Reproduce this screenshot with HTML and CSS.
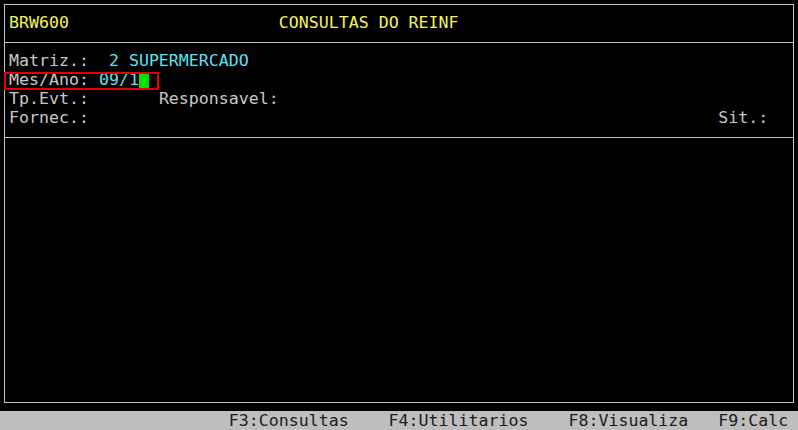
FILE: index.html
```html
<!DOCTYPE html>
<html lang="en">
<head>
    <meta charset="UTF-8">
    <meta name="viewport" content="width=device-width, initial-scale=1.0">
    <title>BRW600 - Consultas do REINF</title>
    <link rel="stylesheet" href="styles.css">
</head>
<body>
    <div class="screen">
        <div class="frame">
            <!-- Title -->
            <div class="title-row">
                <div class="line title">BRW600                     CONSULTAS DO REINF</div>
            </div>

            <!-- Filter fields -->
            <div class="fields">
                <div class="line"><span class="label">Matriz.:</span>  <span class="value">2 SUPERMERCADO</span></div>
                <div class="line field-focus"><span class="label">Mes/Ano:</span> <span class="value">09/1</span><span class="cursor"></span><span class="highlight"></span></div>
                <div class="line"><span class="label">Tp.Evt.:</span>       <span class="label">Responsavel:</span></div>
                <div class="line"><span class="label">Fornec.:</span>                                                               <span class="label">Sit.:</span></div>
            </div>

            <!-- Results area -->
            <div class="results"></div>
        </div>

        <div class="status-bar">
            <div class="line">                       F3:Consultas    F4:Utilitarios    F8:Visualiza   F9:Calc</div>
        </div>
    </div>
</body>
</html>
```

FILE: styles.css
```css
:root {
    --bg: #000000;
    --frame: #c4c4c4;
    --label: #c8c8c8;
    --value: #5ce2f2;
    --title: #f4f45a;
    --cursor: #00e000;
    --mark: #e60000;
    --bar: #bebebe;
    --bar-text: #1c1c1c;
}

* {
    box-sizing: border-box;
}

html, body {
    margin: 0;
    padding: 0;
    background-color: var(--bg);
    height: 100%;
    overflow: hidden;
}

body {
    font-family: 'DejaVu Sans Mono', 'Liberation Mono', monospace;
    font-size: 16.6px;
    color: var(--label);
}

.screen {
    width: 798px;
    height: 430px;
}

.line {
    height: 19px;
    line-height: 19px;
    white-space: pre;
}

.frame {
    margin: 4px 0 0 4px;
    width: 790px;
    height: 399px;
    border: 1px solid var(--frame);
}

.title-row {
    height: 38px;
    padding: 8px 0 0 4px;
    border-bottom: 1px solid var(--frame);
}

.title {
    color: var(--title);
}

.fields {
    height: 95px;
    padding: 8px 0 0 4px;
    border-bottom: 1px solid var(--frame);
}

.label {
    color: var(--label);
}

.value {
    color: var(--value);
}

.field-focus {
    position: relative;
}

.cursor {
    display: inline-block;
    width: 10px;
    height: 15px;
    vertical-align: -3px;
    background-color: var(--cursor);
}

.highlight {
    position: absolute;
    left: -5px;
    top: 2px;
    width: 155px;
    height: 18px;
    border: 2px solid var(--mark);
}

.results {
    height: 264px;
}

.status-bar {
    margin: 8px 0 0 -1px;
    height: 19px;
    background-color: var(--bar);
    color: var(--bar-text);
}
```
